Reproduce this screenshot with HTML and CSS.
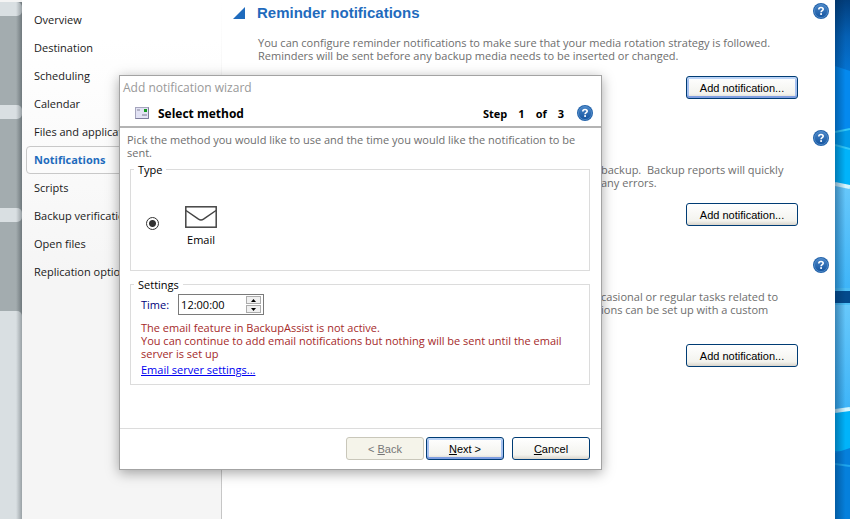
FILE: index.html
```html
<!DOCTYPE html>
<html lang="en">
<head>
    <meta charset="UTF-8">
    <meta name="viewport" content="width=device-width, initial-scale=1.0">
    <title>BackupAssist - Notifications</title>
    <link rel="stylesheet" href="styles.css">
</head>
<body>

    <!-- shared help icon -->
    <svg class="defs" width="0" height="0" aria-hidden="true">
        <defs>
            <linearGradient id="helpFill" x1="0" y1="0" x2="0" y2="1">
                <stop offset="0" stop-color="#4a86c8"/>
                <stop offset="1" stop-color="#14549f"/>
            </linearGradient>
            <symbol id="help" viewBox="0 0 16 16">
                <circle cx="8" cy="8" r="8" fill="#2464ab"/>
                <circle cx="8" cy="8" r="6.6" fill="url(#helpFill)" stroke="#5b93cf" stroke-width=".7"/>
                <path d="M5.8 6.5C5.8 5.2 6.7 4.5 8 4.5s2.2.8 2.2 1.8C10.2 7.700 8.100 7.700 8.100 9.300" fill="none" stroke="#fff" stroke-width="1.600"/>
                <rect x="7.200" y="10.200" width="1.800" height="1.700" fill="#fff"/>
            </symbol>
        </defs>
    </svg>

    <div class="app">
        <div class="rail">
            <div class="tab"></div>
            <div class="tab"></div>
            <div class="tab"></div>
            <div class="tab open"></div>
        </div>

        <nav class="sidebar">
            <a href="#">Overview</a>
            <a href="#">Destination</a>
            <a href="#">Scheduling</a>
            <a href="#">Calendar</a>
            <a href="#">Files and applications</a>
            <a href="#" class="active">Notifications</a>
            <a href="#">Scripts</a>
            <a href="#">Backup verification</a>
            <a href="#">Open files</a>
            <a href="#">Replication options</a>
        </nav>

        <main class="content">
            <section class="block">
                <header>
                    <svg class="arrow" width="12" height="12" viewBox="0 0 12 12"><path d="M12 0v12H0z" fill="#1f6bbd"/></svg>
                    <h2>Reminder notifications</h2>
                    <button class="help" aria-label="Help"><svg width="16" height="16"><use href="#help"/></svg></button>
                </header>
                <p>You can configure reminder notifications to make sure that your media rotation strategy is followed.<br>Reminders will be sent before any backup media needs to be inserted or changed.</p>
                <button class="btn add focused">Add notification...</button>
            </section>

            <section class="block">
                <header>
                    <button class="help" aria-label="Help"><svg width="16" height="16"><use href="#help"/></svg></button>
                </header>
                <p class="tail">backup.&nbsp; Backup reports will quickly<br>any errors.</p>
                <button class="btn add">Add notification...</button>
            </section>

            <section class="block">
                <header>
                    <button class="help" aria-label="Help"><svg width="16" height="16"><use href="#help"/></svg></button>
                </header>
                <p class="tail tall">casional or regular tasks related to<br>ions can be set up with a custom</p>
                <button class="btn add">Add notification...</button>
            </section>
        </main>

        <svg class="desktop" viewBox="0 0 15 519" preserveAspectRatio="none">
            <defs>
                <linearGradient id="sky" x1="0" y1="0" x2="0" y2="1">
                    <stop offset="0" stop-color="#023e7c"/>
                    <stop offset=".07" stop-color="#0560b4"/>
                    <stop offset=".13" stop-color="#0471cf"/>
                    <stop offset=".25" stop-color="#0590ee"/>
                </linearGradient>
                <linearGradient id="pane" x1="0" y1="0" x2="0" y2="1">
                    <stop offset="0" stop-color="#67c8fb"/>
                    <stop offset="1" stop-color="#3db4f8"/>
                </linearGradient>
                <linearGradient id="edge" x1="0" y1="0" x2="1" y2="0">
                    <stop offset="0" stop-color="#002850" stop-opacity=".4"/>
                    <stop offset=".7" stop-color="#002850" stop-opacity="0"/>
                </linearGradient>
            </defs>
            <rect width="15" height="519" fill="url(#sky)"/>
            <path d="M0 66l15 5v62H0z" fill="#0489ee"/>
            <path d="M0 132l15-3v60H0z" fill="#009bea"/>
            <path d="M0 145l15 4v40H0z" fill="#00b3fa"/>
            <path d="M0 132l15-3M0 145l15 4" stroke="#32c8f8" stroke-width="2"/>
            <rect y="185" width="15" height="106" fill="url(#pane)"/>
            <path d="M0 184l15 3" stroke="#d4f6ff" stroke-width="4"/>
            <rect y="288" width="15" height="17" fill="#4cbef5"/>
            <rect y="291" width="15" height="12" fill="#034a8c"/>
            <rect y="305" width="15" height="106" fill="url(#pane)"/>
            <path d="M0 411l15-3v43H0z" fill="#00b3fa"/>
            <path d="M0 411l15-2" stroke="#d4f6ff" stroke-width="4"/>
            <path d="M0 453l15-5v71H0z" fill="#0580dc"/>
            <path d="M0 464l15 2" stroke="#1fa6ee" stroke-width="2"/>
            <rect width="15" height="519" fill="url(#edge)"/>
        </svg>
    </div>

    <!-- wizard window -->
    <form class="dialog" role="dialog" aria-labelledby="wizardTitle">
        <div class="titlebar" id="wizardTitle">Add notification wizard</div>
        <div class="step-header">
            <svg class="card" width="14" height="12" viewBox="0 0 14 12">
                <rect x=".5" y=".5" width="13" height="11" fill="#e2e2f4" stroke="#a5a5bd"/>
                <path d="M.5 11.500h13V.5" fill="none" stroke="#7d7d9c"/>
                <rect x="2" y="2" width="3" height="2" fill="#b3b3c6"/>
                <rect x="9" y="2" width="3" height="3" fill="#159a22"/>
                <rect x="7" y="7" width="5" height="2" fill="#aeaec2"/>
            </svg>
            <h1>Select method</h1>
            <div class="steps"><span>Step</span><span>1</span><span>of</span><span>3</span></div>
            <button type="button" class="help" aria-label="Help"><svg width="16" height="16"><use href="#help"/></svg></button>
        </div>

        <div class="dialog-body">
            <p class="intro">Pick the method you would like to use and the time you would like the notification to be sent.</p>

            <fieldset class="type">
                <legend>Type</legend>
                <input type="radio" name="method" id="email" checked>
                <label for="email">
                    <svg width="32" height="22" viewBox="0 0 32 22" fill="none" stroke="#444" stroke-width="1.500">
                        <rect x=".8" y=".8" width="30.400" height="20.400"/>
                        <path d="M1 4.500l12.500 8.700q2.500 1.600 5 0L31 4.500"/>
                    </svg>
                    Email
                </label>
            </fieldset>

            <fieldset class="settings">
                <legend>Settings</legend>
                <div class="time-row">
                    <label for="time">Time:</label>
                    <div class="spinner">
                        <input type="text" id="time" value="12:00:00">
                        <div class="spin-buttons">
                            <button type="button" aria-label="Up"><svg width="5" height="3" viewBox="0 0 5 3"><path d="M0 3h5L2.500 0z"/></svg></button>
                            <button type="button" aria-label="Down"><svg width="5" height="3" viewBox="0 0 5 3"><path d="M0 0h5L2.500 3z"/></svg></button>
                        </div>
                    </div>
                </div>
                <p class="warning">The email feature in BackupAssist is not active.<br>You can continue to add email notifications but nothing will be sent until the email server is set up</p>
                <a href="#">Email server settings...</a>
            </fieldset>
        </div>

        <div class="dialog-footer">
            <button type="button" class="btn" disabled>&lt; <u>B</u>ack</button>
            <button type="button" class="btn focused"><u>N</u>ext &gt;</button>
            <button type="button" class="btn cancel"><u>C</u>ancel</button>
        </div>
    </form>

</body>
</html>
```
FILE: styles.css
```css
* {
    box-sizing: border-box;
}
body {
    margin: 0;
    font-family: "Open Sans", Tahoma, sans-serif;
    font-size: 11px;
    line-height: 13px;
    color: #000;
    background: #fff;
    overflow: hidden;
}
h1, h2, p {
    margin: 0;
}
button, input {
    font-family: inherit;
    font-size: inherit;
}
.defs {
    position: absolute;
}
.app {
    display: grid;
    grid-template-columns: 22px 200px 1fr 15px;
    height: 100vh;
}

/* left tabs */
.rail {
    display: flex;
    flex-direction: column;
    gap: 89px;
    border-top: 2px solid #f4f4f4;
    background: linear-gradient(to right, transparent 16px, rgba(60, 70, 75, 0.5)), #a3acaf;
}
.tab {
    height: 14px;
    border-radius: 0 5px 5px 0;
    background: linear-gradient(to right, transparent 16px, rgba(90, 100, 105, 0.5)), #d9dfe2;
}
.tab.open {
    flex: 1;
    border-radius: 0 5px 0 0;
}

/* menu */
.sidebar {
    display: flex;
    flex-direction: column;
    padding: 6px 0 0 4px;
    background: linear-gradient(#fff 40px, #f5f5f5 280px);
    border-right: 1px solid;
    border-image: linear-gradient(#fff, #c4c4c4) 1;
}
.sidebar a {
    height: 28px;
    padding: 0 7px;
    border: 1px solid transparent;
    line-height: 26px;
    color: #1a1a1a;
    text-decoration: none;
    white-space: nowrap;
}
.sidebar a.active {
    border-color: #c8c8c8;
    border-radius: 4px;
    background: #fbfbfb;
    color: #1f6bbd;
    font-weight: bold;
}

/* main column */
.content {
    padding: 3px 6px 0 11px;
}
.block {
    display: flex;
    flex-direction: column;
    padding-bottom: 31px;
}
.block header {
    display: flex;
    align-items: center;
    justify-content: flex-end;
    height: 20px;
    margin-bottom: 13px;
}
.block h2 {
    flex: 1;
    margin-left: 12px;
    font: bold 15px/20px "Liberation Sans", Arial, sans-serif;
    color: #1f6bbd;
}
.block p {
    margin: 0 0 14px 25px;
    color: #6e6e6e;
    white-space: nowrap;
}
.block .tail {
    margin-left: 368px;
}
.block .tall {
    min-height: 40px;
}
.help {
    display: flex;
    padding: 0;
    border: 0;
    background: none;
}
.block .help {
    align-self: flex-start;
}
.btn {
    width: 78px;
    height: 23px;
    padding: 0;
    border: 1px solid #003c74;
    border-radius: 3px;
    background: linear-gradient(#fff, #f3f3ee 80%, #d9d5cc);
    font: 11px "Liberation Sans", Arial, sans-serif;
    color: #000;
}
.btn.focused {
    box-shadow: inset 0 2px #bcd4f6, inset 0 -2px #7d9de0, inset 2px 0 #a5c0f0, inset -2px 0 #a5c0f0;
}
.btn:disabled {
    border-color: #c9c7ba;
    background: #f5f4ea;
    color: #777;
}
.add {
    align-self: flex-end;
    width: 112px;
    margin-right: 31px;
}
.desktop {
    width: 15px;
    height: 100%;
}

/* wizard */
.dialog {
    position: absolute;
    left: 119px;
    top: 75px;
    width: 483px;
    border: 1px solid #a3a3a3;
    background: #fff;
    box-shadow: 0 3px 12px rgba(0, 0, 0, 0.35);
}
.titlebar {
    padding: 0 3px;
    height: 24px;
    line-height: 24px;
    color: #999;
    font-size: 12px;
}
.step-header {
    display: flex;
    align-items: center;
    height: 28px;
    padding: 0 8px 0 15px;
    border-bottom: 2px solid #b4b4b4;
}
.step-header h1 {
    flex: 1;
    margin-left: 9px;
    font-size: 12px;
}
.steps {
    display: flex;
    gap: 11px;
    margin-right: 13px;
    font-weight: bold;
}
.dialog-body {
    padding: 5px 11px 43px 10px;
}
.intro {
    margin: 0 10px 4px -3px;
    color: #6e6e6e;
}
fieldset {
    margin: 0;
    border: 1px solid #dcdcdc;
}
legend {
    padding: 0 4px;
}
.type {
    display: flex;
    align-items: center;
    height: 108px;
    padding: 0 15px;
    margin-bottom: 7px;
}
.type legend {
    margin-left: -12px;
}
.type label {
    display: flex;
    flex-direction: column;
    align-items: center;
    gap: 5px;
    margin-left: 26px;
    padding-top: 5px;
}
.type input {
    appearance: none;
    width: 13px;
    height: 13px;
    margin: 0;
    border: 1px solid #333;
    border-radius: 50%;
    background: radial-gradient(circle, #333 3px, #fff 4px);
}
.settings {
    height: 107px;
    padding: 3px 10px 0;
}
.settings legend {
    margin-left: -7px;
}
.time-row {
    display: flex;
    align-items: center;
    gap: 9px;
    margin-bottom: 6px;
    color: #00007b;
}
.spinner {
    display: flex;
    width: 86px;
    height: 21px;
    border: 1px solid #7a7a7a;
    padding: 1px 2px;
}
.spinner input {
    flex: 1;
    min-width: 0;
    padding: 0;
    border: 0;
    outline: 0;
    background: none;
}
.spin-buttons {
    display: flex;
    flex-direction: column;
    gap: 1px;
    width: 15px;
}
.spin-buttons button {
    display: flex;
    flex: 1;
    align-items: center;
    justify-content: center;
    padding: 0;
    border: 1px solid #acacac;
    background: #f0f0f0;
}
.warning {
    margin-bottom: 3px;
    color: #a52a2a;
}
.settings a {
    color: #0000f0;
}
.dialog-footer {
    display: flex;
    justify-content: flex-end;
    gap: 2px;
    padding: 8px 11px 9px;
    border-top: 1px solid #dcdcdc;
}
.cancel {
    margin-left: 6px;
}
```
